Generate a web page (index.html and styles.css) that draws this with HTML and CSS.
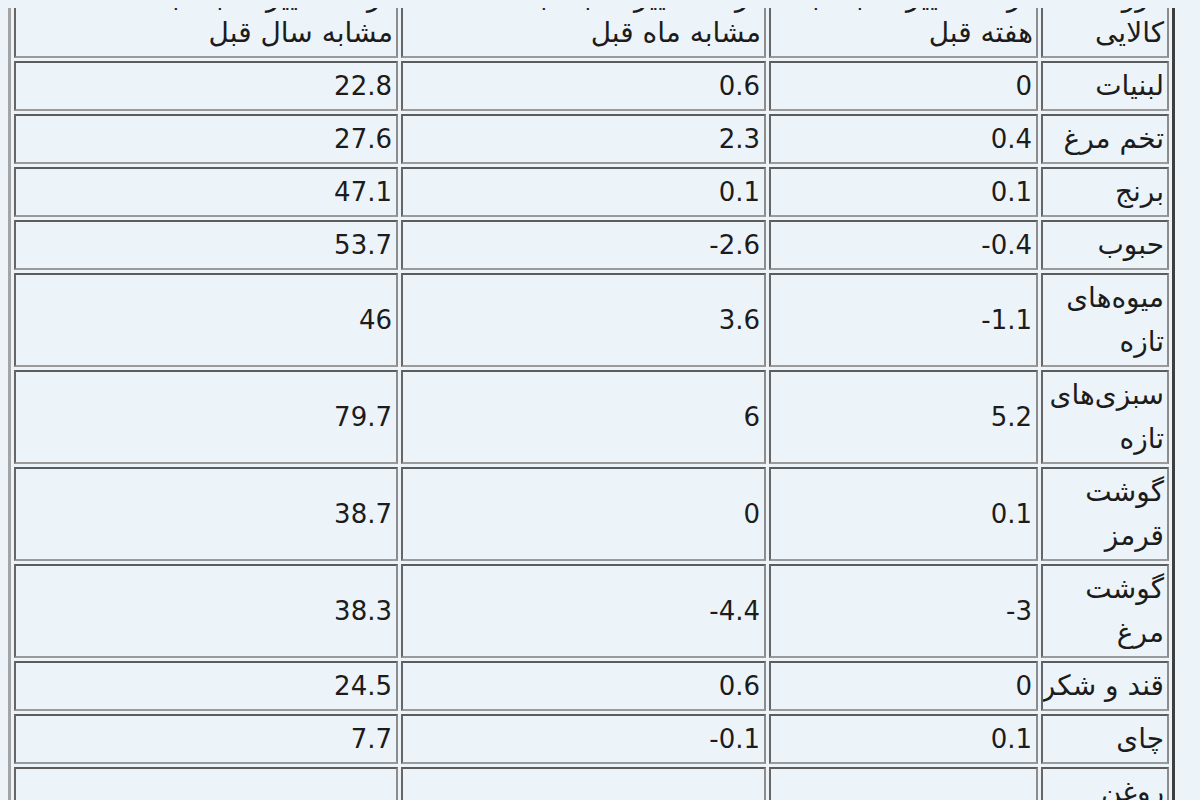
FILE: index.html
```html
<!DOCTYPE html>
<html lang="fa" dir="rtl">
<head>
<meta charset="utf-8">
<title>جدول تغییرات قیمت</title>
<link rel="stylesheet" href="styles.css">
</head>
<body>
<table class="price-table">
  <tbody>
    <tr class="head-row">
      <td class="c-group">گروه<br>کالایی</td>
      <td class="c-week">درصد تغییر نسبت به<br>هفته قبل</td>
      <td class="c-month">درصد تغییر نسبت به هفته<br>مشابه ماه قبل</td>
      <td class="c-year">درصد تغییر نسبت به هفته<br>مشابه سال قبل</td>
    </tr>
    <tr><td>لبنیات</td><td class="num">0</td><td class="num">0.6</td><td class="num">22.8</td></tr>
    <tr><td>تخم مرغ</td><td class="num">0.4</td><td class="num">2.3</td><td class="num">27.6</td></tr>
    <tr><td>برنج</td><td class="num">0.1</td><td class="num">0.1</td><td class="num">47.1</td></tr>
    <tr><td>حبوب</td><td class="num">-0.4</td><td class="num">-2.6</td><td class="num">53.7</td></tr>
    <tr><td>میوه‌های<br>تازه</td><td class="num">-1.1</td><td class="num">3.6</td><td class="num">46</td></tr>
    <tr><td>سبزی‌های<br>تازه</td><td class="num">5.2</td><td class="num">6</td><td class="num">79.7</td></tr>
    <tr><td>گوشت<br>قرمز</td><td class="num">0.1</td><td class="num">0</td><td class="num">38.7</td></tr>
    <tr><td>گوشت<br>مرغ</td><td class="num">-3</td><td class="num">-4.4</td><td class="num">38.3</td></tr>
    <tr><td>قند و شکر</td><td class="num">0</td><td class="num">0.6</td><td class="num">24.5</td></tr>
    <tr><td>چای</td><td class="num">0.1</td><td class="num">-0.1</td><td class="num">7.7</td></tr>
    <tr><td>روغن<br>نباتی</td><td class="num"></td><td class="num"></td><td class="num"></td></tr>
  </tbody>
</table>
</body>
</html>
```

FILE: styles.css
```css
html, body {
  background: #edf4f9;
}

body {
  margin: 8px;
  font-family: "DejaVu Sans", "Noto Sans", sans-serif;
  font-size: 28px;
  color: #1c1c1c;
}

.price-table {
  margin-top: -50px;
  margin-left: 0;
  margin-right: auto;
  width: 1167px;
  table-layout: fixed;
  border-collapse: separate;
  border-spacing: 3px;
  border-style: solid;
  border-width: 3px;
  border-color: #a4a4a4 #3e3e3e #3e3e3e #a4a4a4;
  direction: rtl;
}

.price-table td {
  box-sizing: border-box;
  padding: 1px 3px;
  line-height: 44px;
  text-align: right;
  vertical-align: middle;
  border-style: solid;
  border-width: 2px;
  border-color: #5c5c5c #8c8c8c #9a9a9a #666666;
  white-space: nowrap;
  overflow: hidden;
}

.price-table td.num {
  direction: ltr;
  text-align: right;
  padding-right: 4px;
  font-size: 26px;
}

.price-table .head-row td {
  line-height: 36px;
  padding-top: 13px;
  padding-bottom: 5px;
}

.price-table .c-group { width: 128px; }
.price-table .c-week { width: 269px; }
.price-table .c-month { width: 365px; }
.price-table .c-year { width: 384px; }
```
